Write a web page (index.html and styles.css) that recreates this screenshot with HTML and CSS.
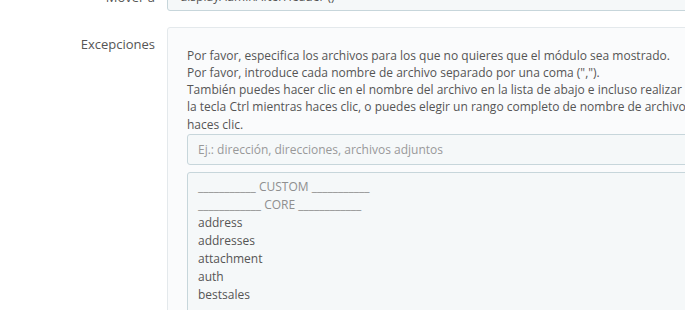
FILE: index.html
```html
<!DOCTYPE html>
<html lang="es">
<head>
    <meta charset="UTF-8">
    <meta name="viewport" content="width=device-width, initial-scale=1.0">
    <title>Excepciones</title>
    <link rel="stylesheet" href="styles.css">
</head>
<body>
    <div class="formulario">
        <div class="grupo">
            <label class="etiqueta etiqueta-mover">Mover a</label>
            <div class="campo">
                <div class="input-falso">displayAdminAfterHeader ()</div>
            </div>
        </div>
        <div class="grupo">
            <label class="etiqueta">Excepciones</label>
            <div class="campo">
                <div class="well">
                    <p class="ayuda">
                        <span>Por favor, especifica los archivos para los que no quieres que el módulo sea mostrado.</span>
                        <span>Por favor, introduce cada nombre de archivo separado por una coma (",").</span>
                        <span>También puedes hacer clic en el nombre del archivo en la lista de abajo e incluso realizar una selección múltiple manteniendo pulsada</span>
                        <span>la tecla Ctrl mientras haces clic, o puedes elegir un rango completo de nombre de archivo manteniendo pulsada la tecla Mayús mientras</span>
                        <span>haces clic.</span>
                    </p>
                    <input type="text" class="entrada" placeholder="Ej.: dirección, direcciones, archivos adjuntos">
                    <ul class="lista">
                        <li class="separador">___________ CUSTOM ___________</li>
                        <li class="separador">____________ CORE ____________</li>
                        <li>address</li>
                        <li>addresses</li>
                        <li>attachment</li>
                        <li>auth</li>
                        <li>bestsales</li>
                    </ul>
                </div>
            </div>
        </div>
    </div>
</body>
</html>
```

FILE: styles.css
```css
*{
    margin: 0;
    padding: 0;
    box-sizing: border-box;
    font-family: 'Open Sans', sans-serif;
}

body {
    background-color: #fff;
    color: #555;
    font-size: 12px;
    overflow: hidden;
    height: 310px;
}

.formulario{
    width: 760px;
    margin-top: -20px;
}

.grupo{
    display: grid;
    grid-template-columns: 155px 1fr;
    column-gap: 12px;
    margin-bottom: 16px;
}

.etiqueta{
    text-align: right;
    font-size: 13px;
    line-height: 18px;
    padding-top: 8px;
    color: #555;
}

.input-falso{
    height: 31px;
    border: 1px solid #c7d6db;
    border-radius: 3px;
    background-color: #f5f8f9;
    padding: 7px 12px;
    font-size: 12px;
    line-height: 17px;
}

.well{
    background-color: #fafbfc;
    border: 1px solid #e4e9ec;
    border-radius: 3px;
    padding: 19px 19px 40px;
}

.ayuda{
    line-height: 17.14px;
    color: #555;
}

.ayuda span{
    display: block;
    white-space: nowrap;
}

.entrada{
    display: block;
    width: 100%;
    height: 31px;
    border: 1px solid #c7d6db;
    border-radius: 3px;
    background-color: #f5f8f9;
    padding: 0 10px;
    font-size: 12px;
    color: #555;
    margin-top: 1px;
    margin-bottom: 7px;
}

.entrada::placeholder{
    color: #999;
}

.lista{
    list-style: none;
    border: 1px solid #c7d6db;
    border-radius: 3px;
    background-color: #f5f8f9;
    padding: 5px 10px;
    height: 200px;
}

.lista li{
    line-height: 18px;
    white-space: nowrap;
}

.separador{
    color: #8f8f8f;
}
```
